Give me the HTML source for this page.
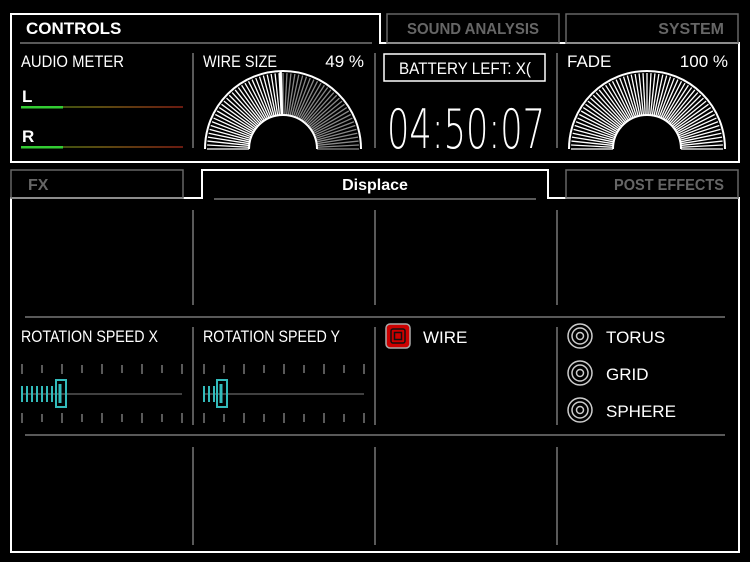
<!DOCTYPE html>
<html><head><style>
html,body{margin:0;padding:0;background:#000;width:750px;height:562px;overflow:hidden}
text{font-family:"Liberation Sans",sans-serif}
</style></head><body>
<svg id="s" width="750" height="562" viewBox="0 0 750 562" xmlns="http://www.w3.org/2000/svg">
<rect width="750" height="562" fill="#000"/>
<g fill="none" stroke="#fff" stroke-width="2">
<path d="M11 162 V14 H380 V43 H739 V162 Z"/>
<path d="M11 552 V198 H202 V170 H548 V198 H739 V552 Z"/>
</g>
<g fill="none" stroke="#666" stroke-width="1.5">
<rect x="387" y="14" width="172" height="29"/>
<rect x="566" y="14" width="172" height="29"/>
<rect x="11" y="170" width="172" height="28"/>
<rect x="566" y="170" width="172" height="28"/>
</g>
<g stroke="#777" stroke-width="1.5">
<line x1="20" y1="43" x2="372" y2="43"/>
<line x1="214" y1="199" x2="536" y2="199"/>
<line x1="25" y1="317" x2="725" y2="317"/>
<line x1="25" y1="435" x2="725" y2="435"/>
<line x1="193" y1="53" x2="193" y2="148"/>
<line x1="557" y1="53" x2="557" y2="148"/>
<line x1="375" y1="53" x2="375" y2="148"/>
<line x1="193" y1="210" x2="193" y2="305"/><line x1="375" y1="210" x2="375" y2="305"/><line x1="557" y1="210" x2="557" y2="305"/>
<line x1="193" y1="327" x2="193" y2="425"/><line x1="375" y1="327" x2="375" y2="425"/><line x1="557" y1="327" x2="557" y2="425"/>
<line x1="193" y1="447" x2="193" y2="545"/><line x1="375" y1="447" x2="375" y2="545"/><line x1="557" y1="447" x2="557" y2="545"/>
</g>
<g fill="#fff" font-size="17">
<text x="26" y="34" font-weight="bold" font-size="17">CONTROLS</text>
<text x="21" y="67" textLength="103" lengthAdjust="spacingAndGlyphs">AUDIO METER</text>
<text x="22" y="102" font-weight="bold">L</text>
<text x="22" y="142" font-weight="bold">R</text>
<text x="203" y="67" textLength="74" lengthAdjust="spacingAndGlyphs">WIRE SIZE</text>
<text x="364" y="67" text-anchor="end">49 %</text>
<text x="567" y="67">FADE</text>
<text x="728" y="67" text-anchor="end">100 %</text>
<text x="465" y="74" text-anchor="middle" textLength="132" lengthAdjust="spacingAndGlyphs">BATTERY LEFT: X(</text>
<text x="387" y="148" font-size="54" style="font-family:'DejaVu Sans ExtraLight','DejaVu Sans',sans-serif" font-weight="200" textLength="158" lengthAdjust="spacingAndGlyphs">04:50:07</text>
<text x="375" y="190" text-anchor="middle" font-weight="bold" font-size="16">Displace</text>
<text x="21" y="342" textLength="137" lengthAdjust="spacingAndGlyphs">ROTATION SPEED X</text>
<text x="203" y="342" textLength="137" lengthAdjust="spacingAndGlyphs">ROTATION SPEED Y</text>
<text x="423" y="343">WIRE</text>
<text x="606" y="343">TORUS</text>
<text x="606" y="380">GRID</text>
<text x="606" y="417">SPHERE</text>
</g>
<g fill="#666" font-size="16" font-weight="bold">
<text x="407" y="34" textLength="132" lengthAdjust="spacingAndGlyphs">SOUND ANALYSIS</text>
<text x="724" y="34" text-anchor="end">SYSTEM</text>
<text x="28" y="190">FX</text>
<text x="724" y="190" text-anchor="end" textLength="110" lengthAdjust="spacingAndGlyphs">POST EFFECTS</text>
</g>
<rect x="384" y="54" width="161" height="27" fill="none" stroke="#fff" stroke-width="1.5"/>
<defs><linearGradient id="m" x1="0" x2="1"><stop offset="0" stop-color="#2a5a10"/><stop offset="0.5" stop-color="#5a4a10"/><stop offset="1" stop-color="#6a1a10"/></linearGradient></defs>
<rect x="21" y="106" width="162" height="2" fill="url(#m)"/>
<rect x="21" y="106" width="42" height="2.5" fill="#3c3"/>
<rect x="21" y="146" width="162" height="2" fill="url(#m)"/>
<rect x="21" y="146" width="42" height="2.5" fill="#3c3"/>
<g id="g1"></g><g id="g2"></g><g id="sl"></g>
<rect x="386" y="324" width="24" height="24" rx="4" fill="#c00" stroke="#aaa" stroke-width="1.5"/>
<rect x="391" y="329" width="14" height="14" rx="2" fill="none" stroke="#111" stroke-width="1.5"/>
<rect x="394.5" y="332.5" width="7" height="7" fill="none" stroke="#111" stroke-width="1.5"/>
<g fill="none" stroke="#ccc" stroke-width="1.5">
<circle cx="580" cy="336" r="12"/><circle cx="580" cy="336" r="8"/><circle cx="580" cy="336" r="3.5"/>
<circle cx="580" cy="373" r="12"/><circle cx="580" cy="373" r="8"/><circle cx="580" cy="373" r="3.5"/>
<circle cx="580" cy="410" r="12"/><circle cx="580" cy="410" r="8"/><circle cx="580" cy="410" r="3.5"/>
</g>
</svg>
<script>
var NS="http://www.w3.org/2000/svg";
function L(p,x1,y1,x2,y2,c,w){var l=document.createElementNS(NS,"line");l.setAttribute("x1",x1);l.setAttribute("y1",y1);l.setAttribute("x2",x2);l.setAttribute("y2",y2);l.setAttribute("stroke",c);l.setAttribute("stroke-width",w);p.appendChild(l);}
function gauge(id,cx,cy,frac){var g=document.getElementById(id);var n=60;
for(var i=0;i<=n;i++){var a=Math.PI*(1-i/n);var c=(i/n<=frac)?"#fff":"#888";
L(g,cx+34*Math.cos(a),cy-34*Math.sin(a),cx+76*Math.cos(a),cy-76*Math.sin(a),c,1.3);}
var p=document.createElementNS(NS,"path");p.setAttribute("d","M"+(cx-78)+" "+cy+" A78 78 0 0 1 "+(cx+78)+" "+cy+" M"+(cx-34)+" "+cy+" A34 34 0 0 1 "+(cx+34)+" "+cy);p.setAttribute("fill","none");p.setAttribute("stroke","#fff");p.setAttribute("stroke-width","2");g.appendChild(p);
if(frac<1){var a=Math.PI*(1-frac);L(g,cx+34*Math.cos(a),cy-34*Math.sin(a),cx+78*Math.cos(a),cy-78*Math.sin(a),"#fff",2.5);}}
gauge("g1",283,149,0.49);gauge("g2",647,149,1);
var s=document.getElementById("sl");
[[22,61],[204,222]].forEach(function(o){var x0=o[0];
for(var i=0;i<9;i++){var x=x0+i*20;var h=(i%2==0)?5:4;L(s,x,369-h,x,369+h,"#777",1.5);L(s,x,418-h,x,418+h,"#777",1.5);}
L(s,x0,394,x0+160,394,"#555",1.5);
for(var x=x0;x<o[1]-4;x+=5)L(s,x,386,x,402,"#3bb",2);
var r=document.createElementNS(NS,"rect");r.setAttribute("x",o[1]-5);r.setAttribute("y",380);r.setAttribute("width",10);r.setAttribute("height",27);r.setAttribute("fill","none");r.setAttribute("stroke","#3bb");r.setAttribute("stroke-width","2");s.appendChild(r);
L(s,o[1]-1,384,o[1]-1,403,"#3bb",3);});
</script>
</body></html>
